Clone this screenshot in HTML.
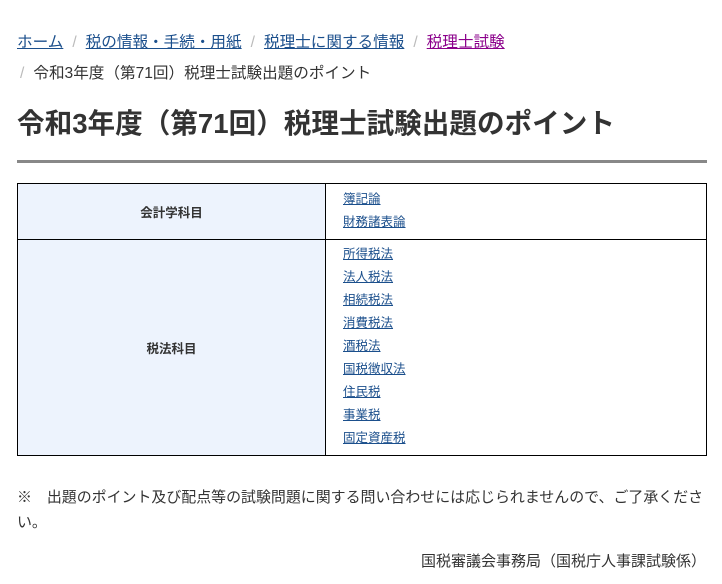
<!DOCTYPE html>
<html><head><meta charset="utf-8"><style>
body{margin:0;background:#fff;font-family:"Liberation Sans","Noto Sans CJK JP",sans-serif;color:#333;width:722px;height:584px;overflow:hidden}
.bc{position:absolute;left:17px;top:27px;font-size:15.6px;line-height:31px;width:690px}
.bc a{color:#1b4f8c;text-decoration:underline}
.bc a.v{color:#8b008b}
.bc .s{color:#bbb;margin:0 9px}
h1{position:absolute;left:17px;top:104px;margin:0;font-size:27.6px;font-weight:bold;color:#333;line-height:40px}
.hr{position:absolute;left:17px;top:160px;width:690px;height:3px;background:#888}
table{position:absolute;left:17px;top:183px;width:690px;border-collapse:collapse;font-size:12.5px}
th{border:1px solid #000;background:#edf3fd;font-weight:bold;width:305px;font-size:12.5px;color:#333}
td{border:1px solid #000;padding:2px 17px 4px 17px}
td a{display:block;color:#1b4f8c;line-height:23px}
.note{position:absolute;left:17px;top:485px;font-size:14.95px;line-height:25px;width:694px;color:#333}
.ft{position:absolute;right:16px;top:550px;font-size:15px;line-height:24px}
</style></head><body>
<div class="bc"><a href="#">ホーム</a><span class="s">/</span><a href="#">税の情報・手続・用紙</a><span class="s">/</span><a href="#">税理士に関する情報</a><span class="s">/</span><a class="v" href="#">税理士試験</a><br><span class="s" style="margin-left:3px">/</span>令和3年度（第71回）税理士試験出題のポイント</div>
<h1>令和3年度（第71回）税理士試験出題のポイント</h1>
<div class="hr"></div>
<table>
<tr style="height:56px"><th>会計学科目</th><td><a href="#">簿記論</a><a href="#">財務諸表論</a></td></tr>
<tr style="height:216px"><th>税法科目</th><td><a href="#">所得税法</a><a href="#">法人税法</a><a href="#">相続税法</a><a href="#">消費税法</a><a href="#">酒税法</a><a href="#">国税徴収法</a><a href="#">住民税</a><a href="#">事業税</a><a href="#">固定資産税</a></td></tr>
</table>
<div class="note">※　出題のポイント及び配点等の試験問題に関する問い合わせには応じられませんので、ご了承ください。</div>
<div class="ft">国税審議会事務局（国税庁人事課試験係）</div>
</body></html>
